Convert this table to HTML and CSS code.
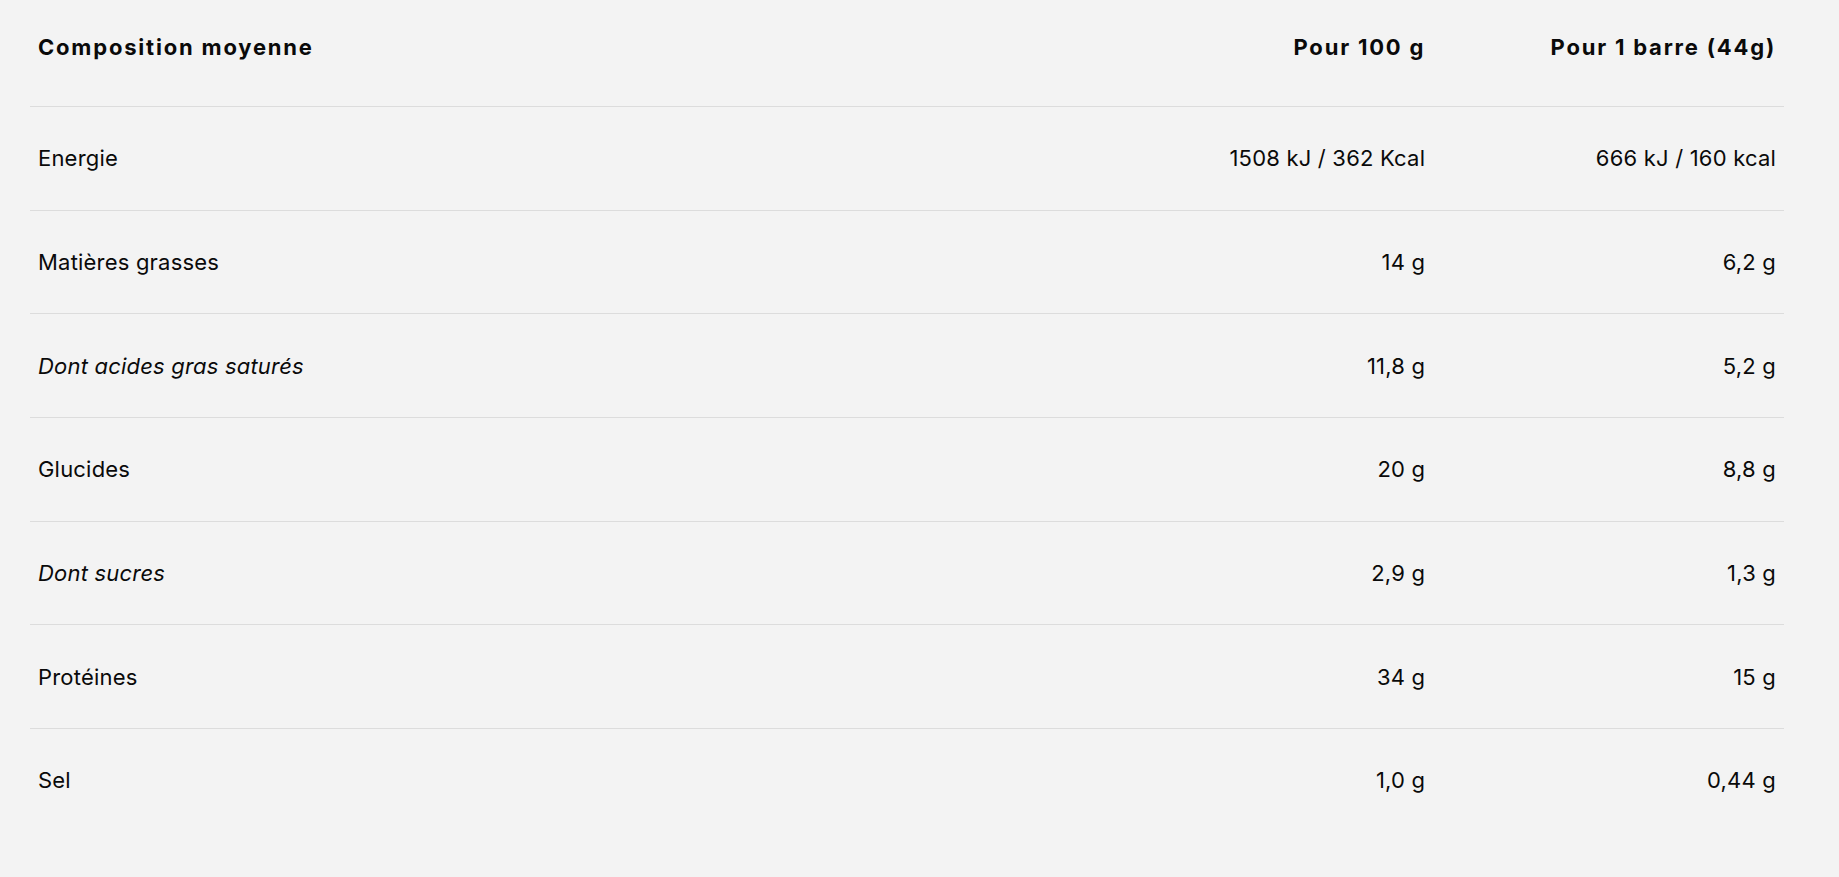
FILE: index.html
```html
<!DOCTYPE html>
<html lang="fr">
<head>
<meta charset="utf-8">
<title>Composition moyenne</title>
<link rel="stylesheet" href="styles.css">
</head>
<body>
<div class="page">
  <table class="nutrition">
    <colgroup>
      <col class="col-label">
      <col class="col-value">
      <col class="col-value">
    </colgroup>
    <thead>
      <tr>
        <th class="label">Composition moyenne</th>
        <th class="value">Pour 100 g</th>
        <th class="value">Pour 1 barre (44g)</th>
      </tr>
    </thead>
    <tbody>
      <tr><td class="label">Energie</td><td class="value">1508 kJ / 362 Kcal</td><td class="value">666 kJ / 160 kcal</td></tr>
      <tr><td class="label">Matières grasses</td><td class="value">14 g</td><td class="value">6,2 g</td></tr>
      <tr><td class="label sub">Dont acides gras saturés</td><td class="value">11,8 g</td><td class="value">5,2 g</td></tr>
      <tr><td class="label">Glucides</td><td class="value">20 g</td><td class="value">8,8 g</td></tr>
      <tr><td class="label sub">Dont sucres</td><td class="value">2,9 g</td><td class="value">1,3 g</td></tr>
      <tr><td class="label">Protéines</td><td class="value">34 g</td><td class="value">15 g</td></tr>
      <tr class="last"><td class="label">Sel</td><td class="value">1,0 g</td><td class="value">0,44 g</td></tr>
    </tbody>
  </table>
</div>
</body>
</html>
```

FILE: styles.css
```css
html, body {
  margin: 0;
  padding: 0;
  background: #f3f3f3;
}

body {
  font-family: Inter, "Noto Sans", sans-serif;
  color: #0a0a0a;
}

.page {
  padding: 0 55px 0 30px;
}

.nutrition {
  width: 100%;
  border-collapse: collapse;
  table-layout: fixed;
  font-size: 22px;
  line-height: 28px;
  letter-spacing: 0.2px;
}

.col-label { width: 60%; }
.col-value { width: 20%; }

.nutrition th,
.nutrition td {
  padding: 37.35px 8px;
  border-bottom: 1px solid #dcdcdc;
  font-weight: 400;
  white-space: nowrap;
}

.nutrition thead th {
  padding-top: 32.5px;
  padding-bottom: 45.5px;
  font-weight: 700;
  letter-spacing: 1.8px;
}

.nutrition .last td {
  border-bottom: none;
}

.label { text-align: left; }
.value { text-align: right; }
.sub { font-style: italic; }
```
